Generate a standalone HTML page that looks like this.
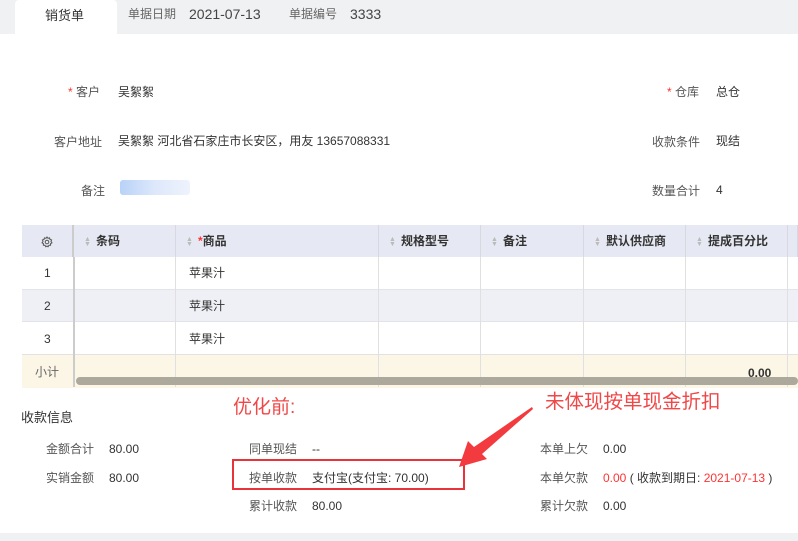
<!DOCTYPE html>
<html><head><meta charset="utf-8"><style>
*{margin:0;padding:0;box-sizing:border-box}
body{width:798px;height:541px;background:#fff;font-family:"Liberation Sans","Noto Sans CJK SC",sans-serif;font-size:12px;color:#333;position:relative;overflow:hidden}
.a{position:absolute;white-space:nowrap;line-height:16px}
.lbl{color:#555}
.red{color:#f33}
.th{position:absolute;top:225px;height:32px;background:#e6e9f3;border-right:1px solid #d7d9de;line-height:32px;font-weight:bold;color:#333;font-size:12px}
.sort{display:inline-block;width:8px;color:#bbb;font-size:7px;line-height:5px;vertical-align:middle;margin:0 4px 0 10px}
.vl{position:absolute;width:1px;background:#e0e0e0;top:257px;height:130px}
</style></head><body>
<div class="a" style="left:0;top:0;width:798px;height:34px;background:#f0f1f3"></div>
<div class="a" style="left:15px;top:0;width:102px;height:34px;background:#fff;border-radius:4px 4px 0 0"></div>
<div class="a" style="left:45px;top:8px;font-size:13px;color:#333">销货单</div>
<div class="a" style="left:128px;top:6px;font-size:12px;color:#666">单据日期</div>
<div class="a" style="left:189px;top:6px;font-size:14px;color:#444">2021-07-13</div>
<div class="a" style="left:289px;top:6px;font-size:12px;color:#666">单据编号</div>
<div class="a" style="left:350px;top:6px;font-size:14px;color:#444">3333</div>

<div class="a" style="left:68px;top:84px"><span class="red">*</span> <span class="lbl">客户</span></div>
<div class="a" style="left:118px;top:84px">吴絮絮</div>
<div class="a lbl" style="left:54px;top:134px">客户地址</div>
<div class="a" style="left:118px;top:133px">吴絮絮 河北省石家庄市长安区，用友 13657088331</div>
<div class="a lbl" style="left:81px;top:183px">备注</div>
<div class="a" style="left:120px;top:180px;width:70px;height:15px;background:linear-gradient(90deg,#b8d2f8,#dde8fb 50%,#eef3fd);border-radius:3px"></div>
<div class="a" style="left:667px;top:84px"><span class="red">*</span> <span class="lbl">仓库</span></div>
<div class="a" style="left:716px;top:84px">总仓</div>
<div class="a lbl" style="left:652px;top:134px">收款条件</div>
<div class="a" style="left:716px;top:133px">现结</div>
<div class="a lbl" style="left:652px;top:183px">数量合计</div>
<div class="a" style="left:716px;top:182px">4</div>

<div class="th" style="left:22px;width:52px;text-align:center;border-right:2px solid #ccc"><svg width="12" height="12" viewBox="0 0 12 12" style="vertical-align:middle"><circle cx="6" cy="6" r="1.8" fill="none" stroke="#555" stroke-width="1"/><path d="M6 1l1 1.3 1.6-.4.4 1.6L10.6 4 10 5.5 11 6.8 9.6 7.6 9.6 9.3 8 9.3 7 10.8 6 10 4.8 10.8 4 9.3 2.4 9.3 2.4 7.6 1 6.8 2 5.5 1.4 4 3 3.5 3.4 1.9 5 2.3z" fill="none" stroke="#555" stroke-width="1"/></svg></div>
<div class="th" style="left:74px;width:102px"><span class="sort">▲<br>▼</span>条码</div>
<div class="th" style="left:176px;width:203px"><span class="sort">▲<br>▼</span><span class="red">*</span>商品</div>
<div class="th" style="left:379px;width:102px"><span class="sort">▲<br>▼</span>规格型号</div>
<div class="th" style="left:481px;width:103px"><span class="sort">▲<br>▼</span>备注</div>
<div class="th" style="left:584px;width:102px"><span class="sort">▲<br>▼</span>默认供应商</div>
<div class="th" style="left:686px;width:102px"><span class="sort">▲<br>▼</span>提成百分比</div>
<div class="th" style="left:788px;width:10px"></div>

<div class="a" style="left:22px;top:289px;width:776px;height:33px;background:#eef0f6;border-top:1px solid #e2e4ea;border-bottom:1px solid #e2e4ea"></div>
<div class="a" style="left:22px;top:354px;width:776px;height:34px;background:#fcf6e6;border-top:1px solid #e2e2e2"></div>
<div class="vl" style="left:73px;background:#ccc;width:2px"></div>
<div class="vl" style="left:175px"></div><div class="vl" style="left:378px"></div><div class="vl" style="left:480px"></div><div class="vl" style="left:583px"></div><div class="vl" style="left:685px"></div><div class="vl" style="left:787px"></div>
<div class="a" style="left:44px;top:265px">1</div>
<div class="a" style="left:44px;top:298px">2</div>
<div class="a" style="left:44px;top:331px">3</div>
<div class="a" style="left:35px;top:364px;color:#666">小计</div>
<div class="a" style="left:189px;top:265px">苹果汁</div>
<div class="a" style="left:189px;top:298px">苹果汁</div>
<div class="a" style="left:189px;top:331px">苹果汁</div>
<div class="a" style="left:748px;top:365px;font-weight:bold">0.00</div>
<div class="a" style="left:76px;top:377px;width:722px;height:8px;background:#aca89c;border-radius:4px"></div>

<div class="a" style="left:21px;top:410px;font-size:13px">收款信息</div>
<div class="a" style="left:233px;top:396px;font-size:19px;line-height:24px;color:#f04848">优化前:</div>
<div class="a" style="left:545px;top:390px;font-size:19.5px;line-height:24px;color:#f04848">未体现按单现金折扣</div>
<div class="a lbl" style="left:46px;top:441px">金额合计</div><div class="a" style="left:109px;top:441px">80.00</div>
<div class="a lbl" style="left:46px;top:470px">实销金额</div><div class="a" style="left:109px;top:470px">80.00</div>
<div class="a lbl" style="left:249px;top:441px">同单现结</div><div class="a" style="left:312px;top:441px">--</div>
<div class="a lbl" style="left:249px;top:470px">按单收款</div><div class="a" style="left:312px;top:470px">支付宝(支付宝: 70.00)</div>
<div class="a lbl" style="left:249px;top:498px">累计收款</div><div class="a" style="left:312px;top:498px">80.00</div>
<div class="a lbl" style="left:540px;top:441px">本单上欠</div><div class="a" style="left:603px;top:441px">0.00</div>
<div class="a lbl" style="left:540px;top:470px">本单欠款</div><div class="a" style="left:603px;top:470px"><span class="red">0.00</span> ( 收款到期日: <span class="red">2021-07-13</span> )</div>
<div class="a lbl" style="left:540px;top:498px">累计欠款</div><div class="a" style="left:603px;top:498px">0.00</div>
<div class="a" style="left:232px;top:459px;width:233px;height:31px;border:2px solid #e8333a"></div>
<svg class="a" style="left:0;top:0" width="798" height="541"><polygon points="532,407 533,409 482,454 487,459 459,467 468,441 474,447" fill="#f23a3f"/></svg>
<div class="a" style="left:0;top:533px;width:798px;height:8px;background:#f0f1f3"></div>
</body></html>
